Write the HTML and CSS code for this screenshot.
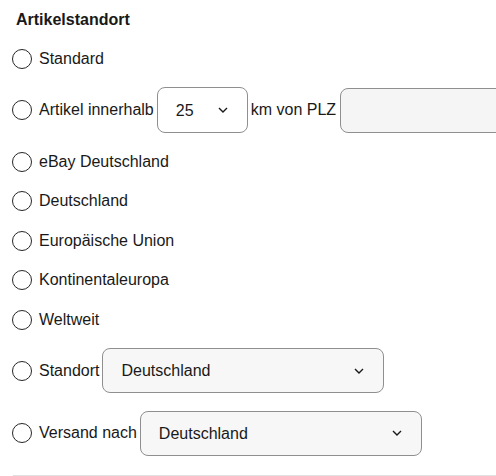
FILE: index.html
```html
<!DOCTYPE html>
<html lang="de">
<head>
<meta charset="utf-8">
<title>Artikelstandort</title>
<link rel="stylesheet" href="styles.css">
</head>
<body>
<div class="panel">
  <div class="title">Artikelstandort</div>
  <div class="rows">
    <label class="row"><input type="radio" name="loc" class="radio"><span class="lbl">Standard</span></label>
    <label class="row tall">
      <input type="radio" name="loc" class="radio"><span class="lbl">Artikel innerhalb</span>
      <span class="sel-wrap sel-small">
        <select class="sel white"><option>25</option></select>
        <svg class="chev" width="10" height="6" viewBox="0 0 10 6"><path d="M1 1 L5 5 L9 1" fill="none" stroke="#191919" stroke-width="1.4"/></svg>
      </span>
      <span class="lbl">km von PLZ</span>
      <span class="plz-clip"><input type="text" class="plz"></span>
    </label>
    <label class="row"><input type="radio" name="loc" class="radio"><span class="lbl">eBay Deutschland</span></label>
    <label class="row"><input type="radio" name="loc" class="radio"><span class="lbl">Deutschland</span></label>
    <label class="row"><input type="radio" name="loc" class="radio"><span class="lbl">Europäische Union</span></label>
    <label class="row"><input type="radio" name="loc" class="radio"><span class="lbl">Kontinentaleuropa</span></label>
    <label class="row"><input type="radio" name="loc" class="radio"><span class="lbl">Weltweit</span></label>
    <label class="row mid">
      <input type="radio" name="loc" class="radio"><span class="lbl">Standort</span>
      <span class="sel-wrap sel-wide">
        <select class="sel"><option>Deutschland</option></select>
        <svg class="chev" width="10" height="6" viewBox="0 0 10 6"><path d="M1 1 L5 5 L9 1" fill="none" stroke="#191919" stroke-width="1.4"/></svg>
      </span>
    </label>
    <label class="row mid">
      <input type="radio" name="loc" class="radio"><span class="lbl">Versand nach</span>
      <span class="sel-wrap sel-wide">
        <select class="sel"><option>Deutschland</option></select>
        <svg class="chev" width="10" height="6" viewBox="0 0 10 6"><path d="M1 1 L5 5 L9 1" fill="none" stroke="#191919" stroke-width="1.4"/></svg>
      </span>
    </label>
  </div>
  <div class="divider"></div>
</div>
</body>
</html>
```
FILE: styles.css
```css
html, body {
  margin: 0;
  padding: 0;
  background: #fff;
  overflow: hidden;
}
body {
  font-family: "Liberation Sans", Arial, sans-serif;
  font-size: 16px;
  color: #191919;
}
.panel {
  padding: 10px 0 0 12px;
}
.title {
  font-weight: bold;
  font-size: 16px;
  line-height: 20px;
  padding-left: 4px;
}
.rows {
  display: flex;
  flex-direction: column;
  gap: 17.5px;
  margin-top: 17.5px;
}
.row {
  display: flex;
  align-items: center;
  height: 22px;
  gap: 3px;
  line-height: 20px;
}
.lbl {
  flex: none;
  white-space: nowrap;
}
.row.tall { height: 46px; }
.row.mid { height: 45px; }
.radio {
  appearance: none;
  -webkit-appearance: none;
  width: 20px;
  height: 20px;
  margin: 0 4px 0 0;
  border: 1.5px solid #262626;
  border-radius: 50%;
  background: #fff;
  flex: none;
  box-sizing: border-box;
}
.sel-wrap {
  position: relative;
  display: inline-flex;
  height: 100%;
  flex: none;
}
.sel-small { width: 91px; }
.sel-wide { width: 282px; }
.sel {
  appearance: none;
  -webkit-appearance: none;
  width: 100%;
  height: 100%;
  box-sizing: border-box;
  border: 1px solid #8f8f8f;
  border-radius: 8px;
  background: #f7f7f7;
  font-family: "Liberation Sans", Arial, sans-serif;
  font-size: 16px;
  color: #191919;
  padding: 0 36px 0 18px;
  margin: 0;
}
.sel.white { background: #fff; }
.chev {
  position: absolute;
  right: 20px;
  top: 50%;
  margin-top: -3px;
  pointer-events: none;
}
.plz-clip {
  flex: 1 1 auto;
  min-width: 0;
  height: 45px;
  overflow: hidden;
  display: flex;
}
.plz {
  width: 220px;
  height: 45px;
  box-sizing: border-box;
  border: 1px solid #8f8f8f;
  border-radius: 8px;
  background: #f5f5f5;
  margin: 0 0 0 1px;
  padding: 0 12px;
  font-family: "Liberation Sans", Arial, sans-serif;
  font-size: 16px;
  flex: none;
}
.divider {
  margin-top: 19.5px;
  height: 1px;
  background: #e0e0e0;
  margin-left: 1px;
}
```
